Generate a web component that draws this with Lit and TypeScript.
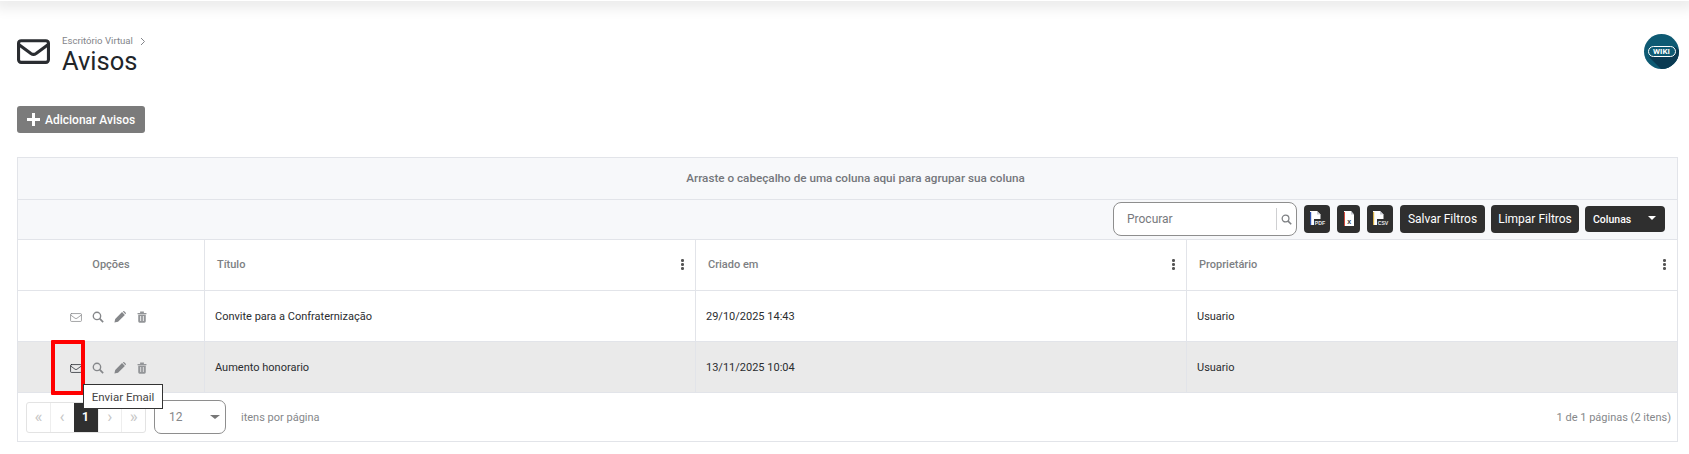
import { LitElement, html, css, svg } from "lit";
import { customElement } from "lit/decorators.js";

const envelope = (cls: string) => html`<svg class=${cls} viewBox="0 0 32 24" fill="none" stroke="currentColor" stroke-linejoin="round" stroke-linecap="round"><rect x="1.5" y="1.5" width="29" height="21" rx="2.5"/><path d="M2 5.5 13.5 14q2.5 1.7 5 0L30 5.5"/></svg>`;
const search = html`<svg class="ic" viewBox="0 0 14 14" fill="none" stroke="currentColor" stroke-width="1.6"><circle cx="5.8" cy="5.8" r="4.3"/><path d="m9 9 4 4" stroke-width="2"/></svg>`;
const pencil = html`<svg class="ic" viewBox="0 0 14 14" fill="currentColor"><path d="M.5 13.5l.9-4.2L9.4 1.3l3.3 3.3-8 8zM10.3.7l.5-.4q.6-.4 1.2 0l1.7 1.7q.4.6 0 1.2l-.4.5z"/></svg>`;
const trash = html`<svg class="ic trash" viewBox="0 0 14 14" fill="currentColor"><path d="M1.8 2.4h10.4v1.4H1.8zM4.8.7h4.4v1.7H4.8zM2.6 4.4h8.8V12q0 1.6-1.6 1.6H4.2q-1.6 0-1.6-1.6zM5 5.8v6h1v-6zm3 0v6h1v-6z" fill-rule="evenodd"/></svg>`;
const fileIcon = (label: string, stripe: string) => html`<svg class="file" viewBox="0 0 20 18">
  <path d="M3 1h7l3.5 3.5V15H3z" fill="#fff"/>
  <path d="M10 1v3.5h3.5z" fill="#c9ccd4"/>
  ${svg`<rect x="3" y="2" width="1.2" height="13" fill=${stripe}/>`}
  <rect x="7" y="9" width="12" height="6.5" fill="#2f2f2f"/>
  <text x="13" y="14.5" text-anchor="middle" font-size="5.2" font-weight="700" font-family="Liberation Sans" fill="#e4e6ea">${label}</text>
</svg>`;
const fileX = html`<svg class="file" viewBox="0 0 20 18">
  <path d="M5 1h7l3 3.5V16H5z" fill="#fff"/>
  <path d="M12 1v3.5h3z" fill="#c9ccd4"/>
  <rect x="5" y="2" width="1" height="14" fill="#d24a3c"/>
  <text x="10.3" y="14" text-anchor="middle" font-size="7" font-weight="700" font-family="Liberation Sans" fill="#3a3a44">x</text>
</svg>`;
const kebab = html`<span class="kebab"><i></i><i></i><i></i></span>`;

@customElement("app-root")
export class AppRoot extends LitElement {
  static styles = css`
    :host { display: block; height: 454px; overflow: hidden; background: #fff; font-family: Roboto, "Liberation Sans", sans-serif; color: #2f2f2f; position: relative; }
    .topbar { height: 1px; box-shadow: 0 0 14px 6px rgba(0,0,0,.10); }
    .head { display: flex; padding: 33px 10px 0 17px; height: 72px; box-sizing: content-box; }
    .head-ic { width: 33px; height: 25px; margin-top: 5px; margin-right: 12px; stroke-width: 3px; color: #2a2d31; }
    .crumbs { font-size: 9.6px; line-height: 12px; color: #83858a; display: flex; gap: 7px; align-items: center; margin-top: 1px; }
    .crumbs svg { width: 6px; height: 9px; }
    h1 { margin: -2px 0 0; font-size: 25.5px; line-height: 32px; font-weight: 400; color: #212529; }
    .spacer { flex: 1; }
    .wiki { width: 35px; height: 35px; border-radius: 50%; background: #0e5a73; position: relative; overflow: hidden; display: flex; align-items: center; justify-content: center; flex: none; }
    .wiki::before { content: ""; position: absolute; inset: 0; background: #0a3a52; clip-path: polygon(5px 23px, 32px 13px, 55px 36px, 18px 36px); }
    .wiki span { position: relative; border: 1.2px solid #fff; border-radius: 6px; color: #fff; font-size: 8px; font-weight: 700; line-height: 9px; padding: 0 3px; width: 28px; box-sizing: border-box; text-align: center; background: #0e5a73; }
    .add { margin: 0 0 0 17px; height: 27px; width: 128px; box-sizing: border-box; background: #7b7b7b; color: #fff; border: 0; border-radius: 3px; display: flex; align-items: center; gap: 5px; padding: 0 0 0 10px; font: 500 12px Roboto, sans-serif; }
    .add svg { width: 13px; height: 13px; fill: #fff; }
    .grid { margin: 24px 11px 0 17px; border: 1px solid #e2e4e9; height: 285px; box-sizing: border-box; display: flex; flex-direction: column; }
    .group { height: 42px; flex: none; background: #f7f8fa; border-bottom: 1px solid #e2e4e9; box-sizing: border-box; display: flex; align-items: center; justify-content: center; padding: 0 0 2px 16px; font-size: 11.7px; font-weight: 500; color: #74767a; }
    .tools { height: 40px; flex: none; background: #f7f8fa; border-bottom: 1px solid #e2e4e9; box-sizing: border-box; display: flex; align-items: center; justify-content: flex-end; gap: 6px; padding: 0 12px 1px 0; }
    .search { width: 184px; height: 34px; box-sizing: border-box; background: #fff; border: 1px solid #8e8e8e; border-radius: 8px; display: flex; align-items: center; margin-right: 1px; font-size: 12px; color: #77797d; }
    .search span { flex: 1; padding-left: 13px; }
    .search b { width: 1px; height: 22px; background: #cfd0d2; }
    .search .ic { width: 11px; height: 11px; margin: 0 4px; color: #7e8084; }
    .btn { background: #2f2f2f; color: #fff; border-radius: 4px; height: 28px; display: flex; align-items: center; justify-content: center; font-size: 12px; font-weight: 400; box-sizing: border-box; white-space: nowrap; }
    .salvar { width: 85px; }
    .limpar { width: 88px; }
    .fbtn { width: 23px; margin-right: 1px; }
    .fbtn.w { width: 26px; }
    .file { width: 20px; height: 18px; }
    .cols { width: 80px; height: 26px; justify-content: flex-start; padding-left: 8px; font-size: 10.5px; font-weight: 500; position: relative; }
    .cols::after { content: ""; position: absolute; right: 9px; top: 10px; border: 4px solid transparent; border-top-color: #fff; border-bottom: 0; }
    .row { display: grid; grid-template-columns: 186px 491px 491px 1fr; height: 51px; flex: none; box-sizing: border-box; border-bottom: 1px solid #e2e4e9; font-size: 11px; }
    .row > div { display: flex; align-items: center; padding-left: 10px; border-left: 1px solid #e2e4e9; position: relative; color: #2b2d30; }
    .row > div:first-child { border-left: 0; justify-content: center; padding-left: 0; }
    .row.hd { font-weight: 500; }
    .row.hd > div { color: #7d7f83; padding-left: 12px; padding-bottom: 2px; }
    .row.hd > div:first-child { padding-left: 0; }
    .row.sel { background: #eaeaea; }
    .kebab { position: absolute; right: 11.5px; top: 19px; display: flex; flex-direction: column; gap: 1.5px; }
    .kebab i { width: 2.5px; height: 2.5px; background: #555; border-radius: 50%; display: block; }
    .acts { display: flex; align-items: center; gap: 10px; margin-top: 2px; margin-right: 4px; color: #85878a; }
    .ic { width: 12px; height: 12px; display: block; }
    .trash { color: #939598; }
    .mail { width: 12px; height: 9px; stroke-width: 2px; color: #85878a; }
    .sel .mail { color: #22262c; }
    .pager { flex: 1; display: flex; align-items: center; padding: 0 6px 0 8px; font-size: 11px; color: #85878a; position: relative; }
    .pages { display: flex; width: 120px; height: 31px; border: 1px solid #e3e3e3; border-radius: 3px; box-sizing: border-box; }
    .pages span { flex: 1; display: flex; align-items: center; justify-content: center; border-left: 1px solid #eee; color: #c6c6c6; font-size: 17px; padding-bottom: 2px; box-sizing: border-box; }
    .pages span:first-child { border-left: 0; }
    .pages .on { flex: none; width: 24px; background: #2f2f2f; color: #fff; font-weight: 700; font-size: 12px; border-left: 0; padding-bottom: 0; }
    .size { width: 72px; height: 34px; box-sizing: border-box; border: 1px solid #8e8e8e; border-radius: 7px; margin-left: 8px; display: flex; align-items: center; padding-left: 14px; position: relative; font-size: 12px; color: #85878a; }
    .size::after { content: ""; position: absolute; right: 5px; top: 14px; border: 4.5px solid transparent; border-top-color: #777; border-bottom: 0; border-left-width: 5px; border-right-width: 5px; }
    .perpage { margin-left: 15px; }
    .count { margin-left: auto; }
    .mark { position: absolute; left: 51px; top: 340px; width: 34px; height: 55px; box-sizing: border-box; border: 4px solid #f00; border-radius: 1px; }
    .tip { position: absolute; left: 83px; top: 384px; width: 80px; height: 25px; box-sizing: border-box; background: #fff; border: 1px solid #333; font-size: 11.5px; color: #444; display: flex; align-items: center; justify-content: center; }
  `;

  private acts() {
    return html`<div class="acts">${envelope("mail")}${search}${pencil}${trash}</div>`;
  }

  render() {
    return html`
      <div class="topbar"></div>
      <div class="head">
        ${envelope("head-ic")}
        <div>
          <div class="crumbs">Escritório Virtual <svg viewBox="0 0 6 9" fill="none" stroke="#83858a"><path d="m1 1 3.5 3.5L1 8"/></svg></div>
          <h1>Avisos</h1>
        </div>
        <div class="spacer"></div>
        <div class="wiki"><span>WIKI</span></div>
      </div>
      <button class="add"><svg viewBox="0 0 13 13"><path d="M5 0h3v5h5v3H8v5H5V8H0V5h5z"/></svg>Adicionar Avisos</button>
      <div class="grid">
        <div class="group">Arraste o cabeçalho de uma coluna aqui para agrupar sua coluna</div>
        <div class="tools">
          <div class="search"><span>Procurar</span><b></b>${search}</div>
          <div class="btn fbtn w">${fileIcon("PDF", "#2b4fb0")}</div>
          <div class="btn fbtn">${fileX}</div>
          <div class="btn fbtn w">${fileIcon("CSV", "#d8b24a")}</div>
          <div class="btn salvar">Salvar Filtros</div>
          <div class="btn limpar">Limpar Filtros</div>
          <div class="btn cols">Colunas</div>
        </div>
        <div class="row hd">
          <div>Opções</div>
          <div>Título${kebab}</div>
          <div>Criado em${kebab}</div>
          <div>Proprietário${kebab}</div>
        </div>
        <div class="row">
          <div>${this.acts()}</div>
          <div>Convite para a Confraternização</div>
          <div>29/10/2025 14:43</div>
          <div>Usuario</div>
        </div>
        <div class="row sel">
          <div>${this.acts()}</div>
          <div>Aumento honorario</div>
          <div>13/11/2025 10:04</div>
          <div>Usuario</div>
        </div>
        <div class="pager">
          <div class="pages"><span>«</span><span>‹</span><span class="on">1</span><span>›</span><span>»</span></div>
          <div class="size">12</div>
          <div class="perpage">itens por página</div>
          <div class="count">1 de 1 páginas (2 itens)</div>
        </div>
      </div>
      <div class="mark"></div>
      <div class="tip">Enviar Email</div>
    `;
  }
}
